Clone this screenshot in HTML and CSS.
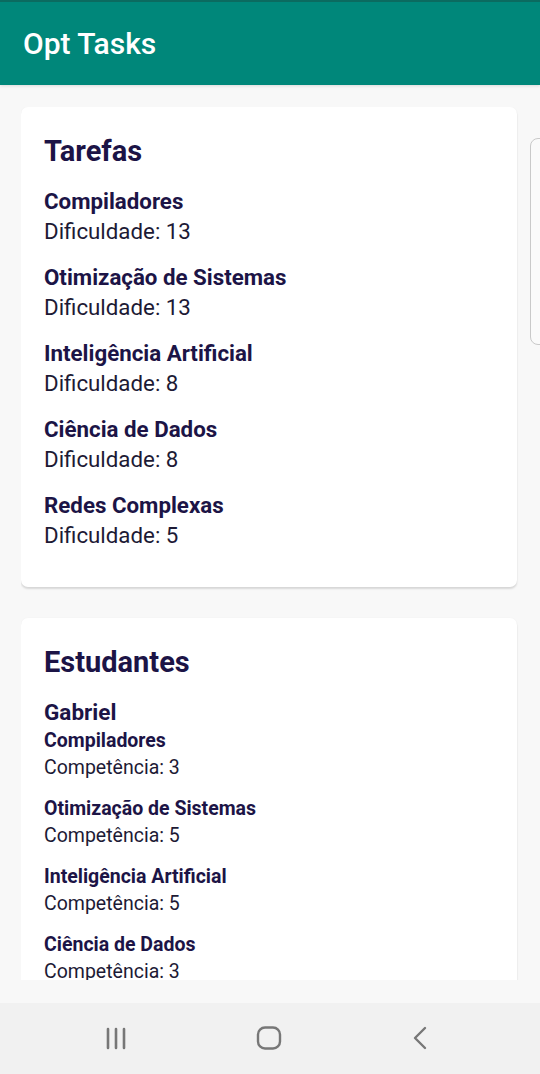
FILE: index.html
```html
<!DOCTYPE html>
<html lang="pt">
<head>
<meta charset="utf-8">
<title>Opt Tasks</title>
<link rel="stylesheet" href="styles.css">
</head>
<body>
<div class="app">
  <header class="appbar">
    <h1 class="appbar-title">Opt Tasks</h1>
  </header>
  <main class="content">
    <div class="scroll">
      <div class="row">
        <section class="card card-tasks">
          <h2 class="card-title">Tarefas</h2>
          <ul class="list">
            <li class="item"><span class="item-name">Compiladores</span><span class="item-value">Dificuldade: 13</span></li>
            <li class="item"><span class="item-name">Otimização de Sistemas</span><span class="item-value">Dificuldade: 13</span></li>
            <li class="item"><span class="item-name">Inteligência Artificial</span><span class="item-value">Dificuldade: 8</span></li>
            <li class="item"><span class="item-name">Ciência de Dados</span><span class="item-value">Dificuldade: 8</span></li>
            <li class="item"><span class="item-name">Redes Complexas</span><span class="item-value">Dificuldade: 5</span></li>
          </ul>
        </section>
        <div class="peek"></div>
      </div>
      <section class="card card-students">
        <h2 class="card-title">Estudantes</h2>
        <div class="student">
          <div class="student-name">Gabriel</div>
          <ul class="skills">
            <li class="skill"><span class="skill-name">Compiladores</span><span class="skill-value">Competência: 3</span></li>
            <li class="skill"><span class="skill-name">Otimização de Sistemas</span><span class="skill-value">Competência: 5</span></li>
            <li class="skill"><span class="skill-name">Inteligência Artificial</span><span class="skill-value">Competência: 5</span></li>
            <li class="skill"><span class="skill-name">Ciência de Dados</span><span class="skill-value">Competência: 3</span></li>
          </ul>
        </div>
      </section>
    </div>
  </main>
  <nav class="navbar">
    <div class="nav-slot"><svg class="nav-icon" width="24" height="24" viewBox="0 0 24 24" aria-hidden="true"><path d="M3 3v19M11 3v19M19 3v19" stroke="#777" stroke-width="2.6" fill="none" stroke-linecap="round"/></svg></div>
    <div class="nav-slot"><svg class="nav-icon" width="26" height="24" viewBox="0 0 26 24" aria-hidden="true"><rect x="2" y="1.5" width="22" height="21" rx="7" stroke="#777" stroke-width="2.4" fill="none"/></svg></div>
    <div class="nav-slot"><svg class="nav-icon" width="16" height="24" viewBox="0 0 16 24" aria-hidden="true"><path d="M13 2L3 12l10 10" stroke="#777" stroke-width="2.4" fill="none" stroke-linecap="round" stroke-linejoin="round"/></svg></div>
  </nav>
</div>
</body>
</html>
```
FILE: styles.css
```css
* { box-sizing: border-box; }
html, body { margin: 0; padding: 0; }
body {
  font-family: Roboto, "Noto Sans", Arial, sans-serif;
  background: #fafafa;
  width: 540px;
  height: 1074px;
  overflow: hidden;
}
.app {
  display: flex;
  flex-direction: column;
  height: 1074px;
}
.appbar {
  height: 85px;
  background: #00877a;
  border-top: 2px solid #0b6b60;
  display: flex;
  align-items: center;
  padding-left: 23px;
  box-shadow: 0 1px 3px rgba(0,0,0,0.12);
  position: relative;
  z-index: 1;
}
.appbar-title {
  margin: 0;
  color: #ffffff;
  font-size: 30px;
  font-weight: 500;
  line-height: 36px;
  padding-top: 1px;
}
.content {
  height: 918px;
  padding: 22px 0 23px 21px;
  background: #f8f8f8;
}
.scroll {
  height: 100%;
  overflow: hidden;
  display: flex;
  flex-direction: column;
  gap: 31px;
}
.row {
  display: flex;
  gap: 13px;
  flex-shrink: 0;
}
.card {
  background: #ffffff;
  border-radius: 7px;
  width: 496px;
  flex-shrink: 0;
  padding: 26px 23px 37px;
  box-shadow: 0 2px 2px rgba(0,0,0,0.13), 0 0 2px rgba(0,0,0,0.03);
}
.peek {
  flex-shrink: 0;
  width: 30px;
  height: 207px;
  margin-top: 31px;
  border: 1px solid #c9c9c9;
  border-radius: 8px;
  background: #fafafa;
}
.card-title {
  margin: 0 0 17px;
  font-size: 29px;
  line-height: 36px;
  font-weight: 700;
  color: #1c1446;
}
.list, .skills {
  list-style: none;
  margin: 0;
  padding: 0;
  display: flex;
  flex-direction: column;
}
.list { gap: 16px; }
.skills { gap: 14px; }
.item, .skill {
  display: flex;
  flex-direction: column;
}
.item-name {
  font-size: 22.3px;
  line-height: 30px;
  font-weight: 700;
  color: #1c1446;
}
.item-value {
  font-size: 22.3px;
  line-height: 30px;
  color: #1d1a35;
}
.student-name {
  font-size: 22.5px;
  line-height: 30px;
  font-weight: 700;
  color: #1c1446;
}
.skill-name {
  font-size: 19.5px;
  line-height: 27px;
  font-weight: 700;
  color: #1c1446;
}
.skill-value {
  font-size: 19.5px;
  line-height: 19px;
  margin: 4px 0;
  color: #1d1a35;
}
.navbar {
  height: 71px;
  background: #f1f1f1;
  display: flex;
  align-items: center;
  padding-bottom: 2px;
}
.nav-slot { display: flex; }
.nav-slot:nth-child(1) { margin-left: 105px; }
.nav-slot:nth-child(2) { margin-left: 127px; }
.nav-slot:nth-child(3) { margin-left: 130px; }
```
